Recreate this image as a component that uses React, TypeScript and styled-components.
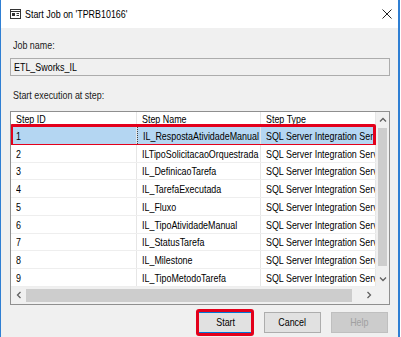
import React from "react";
import styled, { createGlobalStyle } from "styled-components";

const FONT = `"Liberation Sans", Arial, sans-serif`;

const Global = createGlobalStyle`
  html, body { margin: 0; padding: 0; background: #ffffff; }
  body { width: 401px; height: 337px; overflow: hidden; font-family: ${FONT}; }
`;

const Window = styled.div`
  box-sizing: border-box;
  width: 400px;
  height: 337px;
  border-left: 1px solid #2f7fd3;
  border-right: 2px solid #2f7fd3;
  background: #f0f0f0;
  display: flex;
  flex-direction: column;
  font-family: ${FONT};
  font-size: 11px;
  color: #000;
`;

/* The reference text is a horizontally condensed sans; no narrow face is installed,
   so each run of text is narrowed around its anchor. */
const Txt = styled.span<{ $origin?: string }>`
  display: inline-block;
  white-space: nowrap;
  transform: scaleX(0.81);
  transform-origin: ${(p) => p.$origin ?? "left"} center;
`;

const TitleBar = styled.div`
  height: 28px;
  flex: none;
  background: #ffffff;
  display: flex;
  align-items: center;
  padding: 0 6px 0 9px;
  gap: 4px;
`;

const TitleText = styled.span`
  flex: 1;
  font-size: 11px;
  color: #000;
`;

const CloseButton = styled.div`
  width: 10px;
  height: 10px;
  display: flex;
  align-items: center;
  justify-content: center;
`;

const Body = styled.div`
  flex: 1;
  display: flex;
  flex-direction: column;
  padding: 11px 8px 0 9px;
`;

const Label = styled.div<{ $gap?: number }>`
  line-height: 13px;
  margin-top: ${(p) => p.$gap ?? 0}px;
  padding-left: 3px;
  color: #1a1a1a;
`;

const TextBox = styled.div`
  box-sizing: border-box;
  margin-top: 6px;
  height: 18px;
  border: 1px solid #acacac;
  background: #f0f0f0;
  padding-left: 3px;
  line-height: 16px;
`;

const GridFrame = styled.div`
  margin-top: 9px;
  border: 1px solid #8f8f8f;
  background: #ffffff;
  display: grid;
  grid-template-columns: 1fr 13px;
  grid-template-rows: 174.75px 17px;
`;

const Table = styled.div`
  overflow: hidden;
  display: flex;
  flex-direction: column;
`;

const Row = styled.div<{ $header?: boolean; $selected?: boolean }>`
  position: relative;
  flex: none;
  box-sizing: border-box;
  height: ${(p) => (p.$header ? 15 : 17.75)}px;
  display: grid;
  grid-template-columns: 126px 124px 1fr;
  background: ${(p) => (p.$selected ? "#b4d6f2" : "#ffffff")};
  border-bottom: 1px solid #eeeeee;
  & > div {
    padding-top: ${(p) => (p.$header ? 0 : 1)}px;
  }
`;

const Cell = styled.div<{ $focus?: boolean }>`
  box-sizing: border-box;
  padding-left: 5px;
  white-space: nowrap;
  overflow: hidden;
  display: flex;
  align-items: center;
  border-right: 1px solid #e6e6e6;
  border-left: ${(p) => (p.$focus ? "1px dotted #444" : "none")};
`;

const HighlightBox = styled.div<{ $radius?: number }>`
  position: absolute;
  top: -3px;
  bottom: -3px;
  left: -1px;
  right: 0;
  border: 3px solid #e3001b;
  border-radius: ${(p) => p.$radius ?? 2}px;
  pointer-events: none;
`;

const VScroll = styled.div`
  background: #f0f0f0;
  display: flex;
  flex-direction: column;
`;

const HScroll = styled.div`
  background: #f0f0f0;
  display: flex;
  align-items: stretch;
`;

const Corner = styled.div`
  background: #f0f0f0;
`;

const ArrowBox = styled.div<{ $w: number; $h: number }>`
  flex: none;
  width: ${(p) => p.$w}px;
  height: ${(p) => p.$h}px;
  display: flex;
  align-items: center;
  justify-content: center;
`;

const VThumb = styled.div`
  margin: 1px 2px 0 2px;
  height: 138px;
  background: #cdcdcd;
`;

const VTrack = styled.div`
  flex: 1;
`;

const HThumb = styled.div`
  margin: 2px 0 2px 0;
  width: 326px;
  background: #cdcdcd;
`;

const HTrack = styled.div`
  flex: 1;
`;

const ChevronSvg = styled.svg<{ $rot: number }>`
  transform: rotate(${(p) => p.$rot}deg);
`;

const Buttons = styled.div`
  margin-top: 7px;
  margin-right: 2px;
  display: flex;
  justify-content: flex-end;
  gap: 10px;
`;

const ButtonWrap = styled.div`
  position: relative;
`;

const Button = styled.div<{ $default?: boolean; $disabled?: boolean }>`
  box-sizing: border-box;
  width: 57px;
  height: 21px;
  display: flex;
  align-items: center;
  justify-content: center;
  border: 1px solid
    ${(p) => (p.$default ? "#0078d7" : p.$disabled ? "#bfbfbf" : "#adadad")};
  background: ${(p) => (p.$disabled ? "#cccccc" : "#e1e1e1")};
  color: ${(p) => (p.$disabled ? "#a0a0a0" : "#000")};
`;

type Dir = "up" | "down" | "left" | "right";
const ROT: Record<Dir, number> = { up: 0, right: 90, down: 180, left: 270 };

const Chevron = ({ dir }: { dir: Dir }) => (
  <ChevronSvg $rot={ROT[dir]} width="8" height="8" viewBox="0 0 8 8">
    <path d="M1 5.5 L4 2.5 L7 5.5" fill="none" stroke="#606060" strokeWidth="1.3" />
  </ChevronSvg>
);

const WindowIcon = () => (
  <svg width="11" height="10" viewBox="0 0 11 10">
    <rect x="0.5" y="0.5" width="10" height="9" fill="#fff" stroke="#333" />
    <line x1="0.5" y1="2.5" x2="10.5" y2="2.5" stroke="#333" />
    <rect x="2" y="4" width="3" height="3" fill="#333" />
    <rect x="6.5" y="4" width="2.5" height="1" fill="#333" />
    <rect x="6.5" y="6" width="2.5" height="1" fill="#333" />
  </svg>
);

const CloseIcon = () => (
  <svg width="10" height="10" viewBox="0 0 10 10">
    <path d="M0.5 0.5 L9.5 9.5 M9.5 0.5 L0.5 9.5" stroke="#222" strokeWidth="1" fill="none" />
  </svg>
);

const steps = [
  "IL_RespostaAtividadeManual",
  "ILTipoSolicitacaoOrquestrada",
  "IL_DefinicaoTarefa",
  "IL_TarefaExecutada",
  "IL_Fluxo",
  "IL_TipoAtividadeManual",
  "IL_StatusTarefa",
  "IL_Milestone",
  "IL_TipoMetodoTarefa",
];

export default function App() {
  return (
    <>
      <Global />
      <Window>
        <TitleBar>
          <WindowIcon />
          <TitleText>
            <Txt>Start Job on 'TPRB10166'</Txt>
          </TitleText>
          <CloseButton>
            <CloseIcon />
          </CloseButton>
        </TitleBar>
        <Body>
          <Label>
            <Txt>Job name:</Txt>
          </Label>
          <TextBox>
            <Txt>ETL_Sworks_IL</Txt>
          </TextBox>
          <Label $gap={13}>
            <Txt>Start execution at step:</Txt>
          </Label>
          <GridFrame>
            <Table>
              <Row $header>
                <Cell><Txt>Step ID</Txt></Cell>
                <Cell><Txt>Step Name</Txt></Cell>
                <Cell><Txt>Step Type</Txt></Cell>
              </Row>
              {steps.map((name, i) => (
                <Row key={name} $selected={i === 0}>
                  <Cell><Txt>{i + 1}</Txt></Cell>
                  <Cell $focus={i === 0}><Txt>{name}</Txt></Cell>
                  <Cell><Txt>SQL Server Integration Services</Txt></Cell>
                  {i === 0 && <HighlightBox />}
                </Row>
              ))}
            </Table>
            <VScroll>
              <ArrowBox $w={13} $h={15}>
                <Chevron dir="up" />
              </ArrowBox>
              <VThumb />
              <VTrack />
              <ArrowBox $w={13} $h={15}>
                <Chevron dir="down" />
              </ArrowBox>
            </VScroll>
            <HScroll>
              <ArrowBox $w={15} $h={17}>
                <Chevron dir="left" />
              </ArrowBox>
              <HThumb />
              <HTrack />
              <ArrowBox $w={15} $h={17}>
                <Chevron dir="right" />
              </ArrowBox>
            </HScroll>
            <Corner />
          </GridFrame>
          <Buttons>
            <ButtonWrap>
              <Button $default><Txt $origin="center">Start</Txt></Button>
              <HighlightBox $radius={3} />
            </ButtonWrap>
            <Button><Txt $origin="center">Cancel</Txt></Button>
            <Button $disabled><Txt $origin="center">Help</Txt></Button>
          </Buttons>
        </Body>
      </Window>
    </>
  );
}
